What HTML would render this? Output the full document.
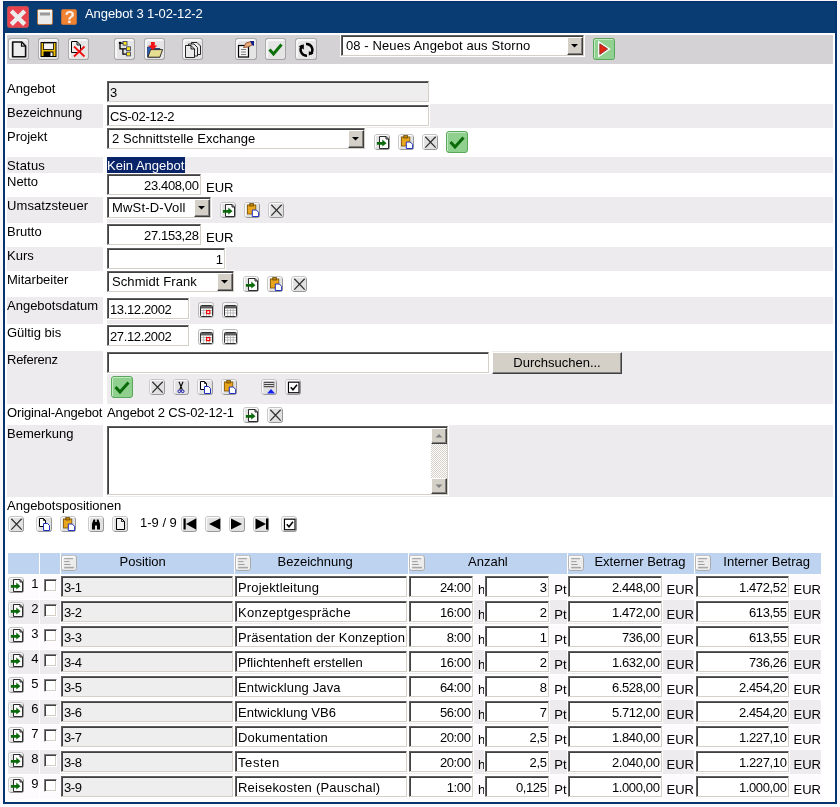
<!DOCTYPE html>
<html lang="de"><head><meta charset="utf-8"><title>Angebot 3 1-02-12-2</title>
<style>
html,body{margin:0;padding:0;}
body{width:840px;height:807px;position:relative;overflow:hidden;background:#faf7fa;
 font-family:"Liberation Sans",Arial,sans-serif;font-size:13px;line-height:15px;color:#000;}
#w div,#w span.t,#w svg.i{position:absolute;box-sizing:border-box;}
#w{position:absolute;left:0;top:0;width:840px;height:807px;will-change:transform;}
span.t{white-space:nowrap;display:block;}
.in{background:#fff;border:1px solid;border-color:#606060 #d4d0c8 #d4d0c8 #606060;
 box-shadow:inset 1px 1px 0 #404040, 0 0 0 1px #fff;overflow:hidden;}
.in.ro{background:#eeeeee;}
.dd{background:#d4d0c8;border:1px solid;border-color:#fff #404040 #404040 #fff;box-shadow:inset -1px -1px 0 #808080;}
.dd svg{position:absolute;left:-1px;top:-1px;}
.tb{background:#e5e5e5;border-radius:3px;border:1px solid;border-color:#adadad #a4a4a4 #a4a4a4 #adadad;box-shadow:inset 2px 2px 0 #f7f7f7;}
</style></head><body>

<div id="w">
<div style="left:3px;top:1px;width:834px;height:803px;background:#05346e;"></div>
<div style="left:5px;top:2.5px;width:830px;height:31px;background:#0a3c74;"></div>
<div style="left:5px;top:33px;width:830px;height:769px;background:#fff;"></div>
<div style="left:7px;top:35px;width:826px;height:29px;background:#d4d2d4;"></div>
<svg class="i" style="left:7px;top:6px" width="22" height="22" viewBox="0 0 22 22"><rect x="0.5" y="0.5" width="21" height="21" rx="2" fill="#e9414d" stroke="#b85058"/><path d="M4.3 5 L17.7 18.4 M17.7 5 L4.3 18.4" stroke="#ececec" stroke-width="4.4" fill="none"/></svg>
<svg class="i" style="left:37px;top:9px" width="16" height="16" viewBox="0 0 16 16"><rect x="0.5" y="0.5" width="15" height="15" rx="1.5" fill="#ececec" stroke="#b57845"/><rect x="1" y="1" width="14" height="2" fill="#fafafa"/><rect x="3" y="3.5" width="10" height="3" fill="#9a9a9a"/></svg>
<svg class="i" style="left:61px;top:9px" width="16" height="16" viewBox="0 0 16 16"><rect x="0.5" y="0.5" width="15" height="15" rx="1.5" fill="#f08232" stroke="#b87040"/><text x="8.6" y="14.2" font-family="Liberation Sans, Arial, sans-serif" font-weight="bold" font-size="17" text-anchor="middle" fill="#f6f0ea">?</text></svg>
<span class="t" style="left:85px;top:6px;letter-spacing:-0.19px;color:#fff;letter-spacing:-0.08px;">Angebot 3 1-02-12-2</span>
<div style="left:7.5px;top:38px;width:21.4px;height:21.8px;" class="tb"></div>
<div style="left:37.5px;top:38px;width:21.4px;height:21.8px;" class="tb"></div>
<div style="left:67.5px;top:38px;width:21.4px;height:21.8px;" class="tb"></div>
<div style="left:113.5px;top:38px;width:21.4px;height:21.8px;" class="tb"></div>
<div style="left:143.5px;top:38px;width:21.4px;height:21.8px;" class="tb"></div>
<div style="left:181.5px;top:38px;width:21.4px;height:21.8px;" class="tb"></div>
<div style="left:235.3px;top:38px;width:21.4px;height:21.8px;" class="tb"></div>
<div style="left:265px;top:38px;width:21.4px;height:21.8px;" class="tb"></div>
<div style="left:295.2px;top:38px;width:21.4px;height:21.8px;" class="tb"></div>
<svg class="i" style="left:7.5px;top:38px" width="21" height="22" viewBox="0 0 21 22"><path d="M4.700 4 H13.800 L17.600 8 V18.800 H4.700 Z" fill="#ededed" stroke="#111" stroke-width="1.600" stroke-linejoin="round"/><path d="M13.500 4.200 V8.200 H17.400" fill="none" stroke="#111" stroke-width="1.200"/></svg>
<svg class="i" style="left:37.5px;top:38px" width="21" height="22" viewBox="0 0 21 22"><rect x="3" y="4.5" width="15" height="14" fill="#f0c000" stroke="#000" stroke-width="1"/><rect x="5.5" y="5" width="10" height="6.5" fill="#f4f4f4" stroke="#000" stroke-width="0.8"/><rect x="5.5" y="13.5" width="10" height="5" fill="#000"/><rect x="12.5" y="14.5" width="2" height="3.5" fill="#fff"/></svg>
<svg class="i" style="left:67.2px;top:38px" width="21" height="22" viewBox="0 0 21 22"><path d="M4.5 3.5 H10 L13.5 7 V14.5 H4.5 Z" fill="#ececec" stroke="#000" stroke-width="1"/><path d="M10 3.5 V7 H13.5" fill="none" stroke="#000" stroke-width="0.9"/><path d="M7 8.5 L17.5 18.5 M17.5 8.5 L7 18.5" stroke="#f01010" stroke-width="1.8" fill="none"/></svg>
<svg class="i" style="left:113.6px;top:38px" width="21" height="22" viewBox="0 0 21 22"><path d="M6 5 V10.900 H12.800 M8.900 10.900 V16.200 H12.800 M6 5 H9" stroke="#000" stroke-width="1.250" fill="none"/><circle cx="6" cy="5" r="1.250" fill="#000"/><rect x="9.100" y="3.500" width="3.900" height="3.700" fill="#f8e020" stroke="#303a60" stroke-width="0.800"/><rect x="12.600" y="8.800" width="3.900" height="3.800" fill="#f8e020" stroke="#303a60" stroke-width="0.800"/><rect x="12.600" y="14.100" width="3.900" height="3.800" fill="#f8e020" stroke="#303a60" stroke-width="0.800"/></svg>
<svg class="i" style="left:143.5px;top:38px" width="21" height="22" viewBox="0 0 21 22"><path d="M3.600 19 V9 H8 L9.500 10.500 H15.800 V19 Z" fill="#2f64c4" stroke="#102a60" stroke-width="0.800"/><path d="M3.900 19.200 L6.600 11.600 H18.600 L15.800 19.200 Z" fill="#e6de90" stroke="#222" stroke-width="0.900"/><path d="M6.900 4 H10.800 V7.500 H13.400 L8.850 11.900 L4.300 7.500 H6.900 Z" fill="#f21414"/></svg>
<svg class="i" style="left:181.5px;top:38px" width="21" height="22" viewBox="0 0 21 22"><path d="M9.500 4.500 H15 L18.500 8 V16.500 H9.500 Z" fill="#ebebeb" stroke="#1c1c1c" stroke-width="0.95"/><path d="M6.500 6 H12 L15.500 9.500 V18 H6.500 Z" fill="#ebebeb" stroke="#1c1c1c" stroke-width="0.95"/><path d="M3.500 7.500 H9 L12.500 11 V19.500 H3.500 Z" fill="#ebebeb" stroke="#1c1c1c" stroke-width="0.95"/><path d="M9 7.500 V11 H12.500" fill="none" stroke="#000" stroke-width="0.9"/></svg>
<svg class="i" style="left:235.3px;top:38px" width="21" height="22" viewBox="0 0 21 22"><rect x="3.500" y="7.500" width="10" height="11.500" fill="#f4f4f4" stroke="#000" stroke-width="1.2"/><path d="M6 11.500 H11 M6 14 H11 M6 16.500 H11" stroke="#707070" stroke-width="0.9"/><path d="M8.500 9.500 L11 5 L16 3.500 L18 6.500 L13 9 Z" fill="#e8a878" stroke="#804020" stroke-width="0.8"/><path d="M15 3 L19 3 L19 8 L17 7 Z" fill="#10208a"/></svg>
<svg class="i" style="left:265px;top:38px" width="21" height="22" viewBox="0 0 21 22"><path d="M4.500 11.500 L8.500 16 L16.500 6.500" fill="none" stroke="#0b720b" stroke-width="3"/></svg>
<svg class="i" style="left:295.2px;top:38px" width="21" height="22" viewBox="0 0 21 22"><path d="M12 17.600 A5.800 5.800 0 0 1 7.400 7.700" fill="none" stroke="#000" stroke-width="2.500"/><path d="M11 6 A5.800 5.800 0 0 1 15.600 15.900" fill="none" stroke="#000" stroke-width="2.500"/><path d="M3.700 8.200 L8.800 6.200 L8.800 11.400 Z" fill="#000"/><path d="M18.700 15.400 L13.800 13.200 L13.800 17.500 Z" fill="#000"/></svg>
<div class="in" style="left:341px;top:35px;width:243px;height:21px;"><span class="t" style="left:4px;top:2px;letter-spacing:0.1px;">08 - Neues Angebot aus Storno</span><div class="dd" style="right:0px;top:1px;width:16px;height:18px;"><svg width="16" height="18" viewBox="0 0 16 18"><path d="M4 7.0 h7 l-3.5 3.5 z" fill="#000"/></svg></div></div>
<svg class="i" style="left:593px;top:38px" width="22" height="22" viewBox="0 0 22 22"><rect x="0.5" y="0.5" width="21" height="21" rx="2" fill="#90d090" stroke="#5aa65a"/><path d="M1.5 20 V3 Q1.5 1.5 3 1.5 H20" stroke="#c4eac4" fill="none"/><path d="M5 2.500 L17.800 11 L5 19.800 Z" fill="#f2fbf2"/><path d="M6.800 5.800 L14.600 11 L6.800 16.400 Z" fill="#e32410" stroke="#8a2a2a" stroke-width="0.9"/></svg>
<span class="t" style="left:7px;top:81px;">Angebot</span>
<div style="left:7px;top:104px;width:96px;height:24px;background:#eeebee;"></div>
<div style="left:107px;top:104px;width:726px;height:24px;background:#eeebee;"></div>
<span class="t" style="left:7px;top:105px;">Bezeichnung</span>
<span class="t" style="left:7px;top:129px;">Projekt</span>
<div style="left:7px;top:157px;width:96px;height:16px;background:#eeebee;"></div>
<div style="left:107px;top:157px;width:726px;height:16px;background:#eeebee;"></div>
<span class="t" style="left:7px;top:158px;letter-spacing:0.2px;">Status</span>
<span class="t" style="left:7px;top:174px;">Netto</span>
<div style="left:7px;top:197px;width:96px;height:26px;background:#eeebee;"></div>
<div style="left:107px;top:197px;width:726px;height:26px;background:#eeebee;"></div>
<span class="t" style="left:7px;top:198px;letter-spacing:0.08px;">Umsatzsteuer</span>
<span class="t" style="left:7px;top:224px;">Brutto</span>
<div style="left:7px;top:247px;width:96px;height:24px;background:#eeebee;"></div>
<div style="left:107px;top:247px;width:726px;height:24px;background:#eeebee;"></div>
<span class="t" style="left:7px;top:248px;">Kurs</span>
<span class="t" style="left:7px;top:272px;">Mitarbeiter</span>
<div style="left:7px;top:297px;width:96px;height:27px;background:#eeebee;"></div>
<div style="left:107px;top:297px;width:726px;height:27px;background:#eeebee;"></div>
<span class="t" style="left:7px;top:298px;">Angebotsdatum</span>
<span class="t" style="left:7px;top:325px;">Gültig bis</span>
<div style="left:7px;top:351px;width:96px;height:53px;background:#eeebee;"></div>
<div style="left:107px;top:351px;width:726px;height:53px;background:#eeebee;"></div>
<span class="t" style="left:7px;top:352px;letter-spacing:-0.25px;">Referenz</span>
<span class="t" style="left:7px;top:405px;letter-spacing:-0.02px;letter-spacing:-0.14px;">Original-Angebot</span>
<div style="left:7px;top:425px;width:96px;height:72px;background:#eeebee;"></div>
<div style="left:107px;top:425px;width:726px;height:72px;background:#eeebee;"></div>
<span class="t" style="left:7px;top:426px;">Bemerkung</span>
<div class="in ro" style="left:107px;top:81px;width:322px;height:21px;"><span class="t" style="left:2px;right:1.4px;top:3px;text-align:left;letter-spacing:-0.36px;">3</span></div>
<div class="in" style="left:107px;top:105px;width:322px;height:21px;"><span class="t" style="left:2px;right:1.4px;top:3px;text-align:left;letter-spacing:-0.29px;">CS-02-12-2</span></div>
<div class="in" style="left:107px;top:128px;width:258px;height:21px;"><span class="t" style="left:4px;top:2px;letter-spacing:0.04px;">2 Schnittstelle Exchange</span><div class="dd" style="right:0px;top:1px;width:16px;height:18px;"><svg width="16" height="18" viewBox="0 0 16 18"><path d="M4 7.0 h7 l-3.5 3.5 z" fill="#000"/></svg></div></div>
<svg class="i" style="left:374px;top:134px;" width="16" height="16" viewBox="0 0 16 16"><rect x="0.5" y="0.5" width="15" height="15" rx="2.5" fill="#e1e1e1" stroke="#c4c4c4"/><path d="M1.500 14 V3 Q1.500 1.500 3 1.500 H14" stroke="#fbfbfb" stroke-width="1.2" fill="none"/><path d="M2.500 15.500 H13.500 Q15.500 15.500 15.500 13.500 V2.500" stroke="#989898" fill="none"/><path d="M5.500 2.500 H12 L14.500 5 V14.500 H5.500 Z" fill="#fafafa" stroke="#111" stroke-width="0.88"/><path d="M12 2.500 V5 H14.500" fill="none" stroke="#111" stroke-width="0.9"/><path d="M2.900 7.900 H8.300 V5.400 L12.500 9.300 L8.300 12.600 V10.700 H2.900 Z" fill="#0a6a0a"/></svg>
<svg class="i" style="left:398px;top:134px;" width="16" height="16" viewBox="0 0 16 16"><rect x="0.5" y="0.5" width="15" height="15" rx="2.5" fill="#e1e1e1" stroke="#c4c4c4"/><path d="M1.500 14 V3 Q1.500 1.500 3 1.500 H14" stroke="#fbfbfb" stroke-width="1.2" fill="none"/><path d="M2.500 15.500 H13.500 Q15.500 15.500 15.500 13.500 V2.500" stroke="#989898" fill="none"/><rect x="3.400" y="3" width="8.400" height="9" fill="#e9a61c" stroke="#7a5200" stroke-width="0.8"/><rect x="5.800" y="1.600" width="3.600" height="2.400" fill="#c08400" stroke="#5a3c00" stroke-width="0.7"/><path d="M8.300 8 H12.300 L14.600 10.300 V14.500 H8.300 Z" fill="#fff" stroke="#2030c0" stroke-width="1"/></svg>
<svg class="i" style="left:422px;top:134px;" width="16" height="16" viewBox="0 0 16 16"><rect x="0.5" y="0.5" width="15" height="15" rx="2.5" fill="#e1e1e1" stroke="#c4c4c4"/><path d="M1.500 14 V3 Q1.500 1.500 3 1.500 H14" stroke="#fbfbfb" stroke-width="1.2" fill="none"/><path d="M2.500 15.500 H13.500 Q15.500 15.500 15.500 13.500 V2.500" stroke="#989898" fill="none"/><path d="M3.300 2.800 L13.700 13.600 M13.700 2.800 L3.300 13.600" stroke="#303030" stroke-width="1.250" fill="none"/></svg>
<svg class="i" style="left:446px;top:131px;" width="22" height="22" viewBox="0 0 22 22"><rect x="0.5" y="0.5" width="21" height="21" rx="2.5" fill="#8fd08f" stroke="#5aa65a"/><path d="M1.5 20 V3 Q1.5 1.5 3 1.5 H20" stroke="#c4eac4" fill="none"/><path d="M4.5 11 L9 16 L17.5 6.5" fill="none" stroke="#0b6b0b" stroke-width="3"/></svg>
<div style="left:107px;top:157px;width:78px;height:16px;background:#0a246a;"></div>
<span class="t" style="left:107px;top:158px;color:#fff;">Kein Angebot</span>
<div class="in" style="left:107px;top:174px;width:94px;height:21px;"><span class="t" style="left:2px;right:1.4px;top:3px;text-align:right;letter-spacing:-0.36px;">23.408,00</span></div>
<span class="t" style="left:206px;top:179.5px;">EUR</span>
<div class="in" style="left:107px;top:197px;width:104px;height:21px;"><span class="t" style="left:4px;top:2px;letter-spacing:0.19px;">MwSt-D-Voll</span><div class="dd" style="right:0px;top:1px;width:16px;height:18px;"><svg width="16" height="18" viewBox="0 0 16 18"><path d="M4 7.0 h7 l-3.5 3.5 z" fill="#000"/></svg></div></div>
<svg class="i" style="left:220px;top:202px;" width="16" height="16" viewBox="0 0 16 16"><rect x="0.5" y="0.5" width="15" height="15" rx="2.5" fill="#e1e1e1" stroke="#c4c4c4"/><path d="M1.500 14 V3 Q1.500 1.500 3 1.500 H14" stroke="#fbfbfb" stroke-width="1.2" fill="none"/><path d="M2.500 15.500 H13.500 Q15.500 15.500 15.500 13.500 V2.500" stroke="#989898" fill="none"/><path d="M5.500 2.500 H12 L14.500 5 V14.500 H5.500 Z" fill="#fafafa" stroke="#111" stroke-width="0.88"/><path d="M12 2.500 V5 H14.500" fill="none" stroke="#111" stroke-width="0.9"/><path d="M2.900 7.900 H8.300 V5.400 L12.500 9.300 L8.300 12.600 V10.700 H2.900 Z" fill="#0a6a0a"/></svg>
<svg class="i" style="left:244px;top:202px;" width="16" height="16" viewBox="0 0 16 16"><rect x="0.5" y="0.5" width="15" height="15" rx="2.5" fill="#e1e1e1" stroke="#c4c4c4"/><path d="M1.500 14 V3 Q1.500 1.500 3 1.500 H14" stroke="#fbfbfb" stroke-width="1.2" fill="none"/><path d="M2.500 15.500 H13.500 Q15.500 15.500 15.500 13.500 V2.500" stroke="#989898" fill="none"/><rect x="3.400" y="3" width="8.400" height="9" fill="#e9a61c" stroke="#7a5200" stroke-width="0.8"/><rect x="5.800" y="1.600" width="3.600" height="2.400" fill="#c08400" stroke="#5a3c00" stroke-width="0.7"/><path d="M8.300 8 H12.300 L14.600 10.300 V14.500 H8.300 Z" fill="#fff" stroke="#2030c0" stroke-width="1"/></svg>
<svg class="i" style="left:268px;top:202px;" width="16" height="16" viewBox="0 0 16 16"><rect x="0.5" y="0.5" width="15" height="15" rx="2.5" fill="#e1e1e1" stroke="#c4c4c4"/><path d="M1.500 14 V3 Q1.500 1.500 3 1.500 H14" stroke="#fbfbfb" stroke-width="1.2" fill="none"/><path d="M2.500 15.500 H13.500 Q15.500 15.500 15.500 13.500 V2.500" stroke="#989898" fill="none"/><path d="M3.300 2.800 L13.700 13.600 M13.700 2.800 L3.300 13.600" stroke="#303030" stroke-width="1.250" fill="none"/></svg>
<div class="in" style="left:107px;top:224px;width:94px;height:21px;"><span class="t" style="left:2px;right:1.4px;top:3px;text-align:right;letter-spacing:-0.36px;">27.153,28</span></div>
<span class="t" style="left:206px;top:230px;">EUR</span>
<div class="in" style="left:107px;top:248px;width:118px;height:21px;"><span class="t" style="left:2px;right:1.4px;top:3px;text-align:right;letter-spacing:-0.36px;">1</span></div>
<div class="in" style="left:107px;top:271px;width:127px;height:21px;"><span class="t" style="left:4px;top:2px;letter-spacing:0.08px;">Schmidt Frank</span><div class="dd" style="right:0px;top:1px;width:16px;height:18px;"><svg width="16" height="18" viewBox="0 0 16 18"><path d="M4 7.0 h7 l-3.5 3.5 z" fill="#000"/></svg></div></div>
<svg class="i" style="left:243px;top:276px;" width="16" height="16" viewBox="0 0 16 16"><rect x="0.5" y="0.5" width="15" height="15" rx="2.5" fill="#e1e1e1" stroke="#c4c4c4"/><path d="M1.500 14 V3 Q1.500 1.500 3 1.500 H14" stroke="#fbfbfb" stroke-width="1.2" fill="none"/><path d="M2.500 15.500 H13.500 Q15.500 15.500 15.500 13.500 V2.500" stroke="#989898" fill="none"/><path d="M5.500 2.500 H12 L14.500 5 V14.500 H5.500 Z" fill="#fafafa" stroke="#111" stroke-width="0.88"/><path d="M12 2.500 V5 H14.500" fill="none" stroke="#111" stroke-width="0.9"/><path d="M2.900 7.900 H8.300 V5.400 L12.500 9.300 L8.300 12.600 V10.700 H2.900 Z" fill="#0a6a0a"/></svg>
<svg class="i" style="left:267px;top:276px;" width="16" height="16" viewBox="0 0 16 16"><rect x="0.5" y="0.5" width="15" height="15" rx="2.5" fill="#e1e1e1" stroke="#c4c4c4"/><path d="M1.500 14 V3 Q1.500 1.500 3 1.500 H14" stroke="#fbfbfb" stroke-width="1.2" fill="none"/><path d="M2.500 15.500 H13.500 Q15.500 15.500 15.500 13.500 V2.500" stroke="#989898" fill="none"/><rect x="3.400" y="3" width="8.400" height="9" fill="#e9a61c" stroke="#7a5200" stroke-width="0.8"/><rect x="5.800" y="1.600" width="3.600" height="2.400" fill="#c08400" stroke="#5a3c00" stroke-width="0.7"/><path d="M8.300 8 H12.300 L14.600 10.300 V14.500 H8.300 Z" fill="#fff" stroke="#2030c0" stroke-width="1"/></svg>
<svg class="i" style="left:291px;top:276px;" width="16" height="16" viewBox="0 0 16 16"><rect x="0.5" y="0.5" width="15" height="15" rx="2.5" fill="#e1e1e1" stroke="#c4c4c4"/><path d="M1.500 14 V3 Q1.500 1.500 3 1.500 H14" stroke="#fbfbfb" stroke-width="1.2" fill="none"/><path d="M2.500 15.500 H13.500 Q15.500 15.500 15.500 13.500 V2.500" stroke="#989898" fill="none"/><path d="M3.300 2.800 L13.700 13.600 M13.700 2.800 L3.300 13.600" stroke="#303030" stroke-width="1.250" fill="none"/></svg>
<div class="in" style="left:107px;top:298px;width:82px;height:21px;"><span class="t" style="left:2px;right:1.4px;top:3px;text-align:left;letter-spacing:-0.36px;">13.12.2002</span></div>
<svg class="i" style="left:198px;top:302px;" width="16" height="16" viewBox="0 0 16 16"><rect x="0.5" y="0.5" width="15" height="15" rx="2" fill="#f6f6f6" stroke="#b8b8b8"/><rect x="2.5" y="3.5" width="12" height="11" rx="1" fill="#fff" stroke="#303030"/><rect x="3" y="4" width="11" height="2.5" fill="#606060"/><path d="M3 8.5 H14 M3 11 H14 M5.7 6.5 V14 M8.5 6.5 V14 M11.2 6.5 V14" stroke="#b4b4b4" fill="none" stroke-width="0.9"/><rect x="8.6" y="8.6" width="3.2" height="3" fill="#fff" stroke="#f00000" stroke-width="1.2"/></svg>
<svg class="i" style="left:222px;top:302px;" width="16" height="16" viewBox="0 0 16 16"><rect x="0.5" y="0.5" width="15" height="15" rx="2" fill="#f6f6f6" stroke="#b8b8b8"/><rect x="2.5" y="3.5" width="12" height="11" rx="1" fill="#fff" stroke="#303030"/><rect x="3" y="4" width="11" height="2.5" fill="#606060"/><path d="M3 8.5 H14 M3 11 H14 M5.7 6.5 V14 M8.5 6.5 V14 M11.2 6.5 V14" stroke="#b4b4b4" fill="none" stroke-width="0.9"/></svg>
<div class="in" style="left:107px;top:325px;width:82px;height:21px;"><span class="t" style="left:2px;right:1.4px;top:3px;text-align:left;letter-spacing:-0.36px;">27.12.2002</span></div>
<svg class="i" style="left:198px;top:329px;" width="16" height="16" viewBox="0 0 16 16"><rect x="0.5" y="0.5" width="15" height="15" rx="2" fill="#f6f6f6" stroke="#b8b8b8"/><rect x="2.5" y="3.5" width="12" height="11" rx="1" fill="#fff" stroke="#303030"/><rect x="3" y="4" width="11" height="2.5" fill="#606060"/><path d="M3 8.5 H14 M3 11 H14 M5.7 6.5 V14 M8.5 6.5 V14 M11.2 6.5 V14" stroke="#b4b4b4" fill="none" stroke-width="0.9"/><rect x="8.6" y="8.6" width="3.2" height="3" fill="#fff" stroke="#f00000" stroke-width="1.2"/></svg>
<svg class="i" style="left:222px;top:329px;" width="16" height="16" viewBox="0 0 16 16"><rect x="0.5" y="0.5" width="15" height="15" rx="2" fill="#f6f6f6" stroke="#b8b8b8"/><rect x="2.5" y="3.5" width="12" height="11" rx="1" fill="#fff" stroke="#303030"/><rect x="3" y="4" width="11" height="2.5" fill="#606060"/><path d="M3 8.5 H14 M3 11 H14 M5.7 6.5 V14 M8.5 6.5 V14 M11.2 6.5 V14" stroke="#b4b4b4" fill="none" stroke-width="0.9"/></svg>
<div style="left:107px;top:351px;width:385px;height:23px;background:#fff;"></div>
<div class="in" style="left:107px;top:352px;width:382px;height:21px;"><span class="t" style="left:2px;right:1.4px;top:3px;text-align:left;"></span></div>
<div style="left:492px;top:352px;width:130px;height:22px;background:#d4d0c8;border:1px solid;border-color:#fff #404040 #404040 #fff;box-shadow:inset -1px -1px 0 #808080;"><span class="t" style="left:0;right:0;top:2px;text-align:center;">Durchsuchen...</span></div>
<svg class="i" style="left:111px;top:376px;" width="22" height="22" viewBox="0 0 22 22"><rect x="0.5" y="0.5" width="21" height="21" rx="2.5" fill="#8fd08f" stroke="#5aa65a"/><path d="M1.5 20 V3 Q1.5 1.5 3 1.5 H20" stroke="#c4eac4" fill="none"/><path d="M4.5 11 L9 16 L17.5 6.5" fill="none" stroke="#0b6b0b" stroke-width="3"/></svg>
<svg class="i" style="left:149px;top:379px;" width="16" height="16" viewBox="0 0 16 16"><rect x="0.5" y="0.5" width="15" height="15" rx="2.5" fill="#e1e1e1" stroke="#c4c4c4"/><path d="M1.500 14 V3 Q1.500 1.500 3 1.500 H14" stroke="#fbfbfb" stroke-width="1.2" fill="none"/><path d="M2.500 15.500 H13.500 Q15.500 15.500 15.500 13.500 V2.500" stroke="#989898" fill="none"/><path d="M3.300 2.800 L13.700 13.600 M13.700 2.800 L3.300 13.600" stroke="#303030" stroke-width="1.250" fill="none"/></svg>
<svg class="i" style="left:173px;top:379px;" width="16" height="16" viewBox="0 0 16 16"><rect x="0.5" y="0.5" width="15" height="15" rx="2.5" fill="#e1e1e1" stroke="#c4c4c4"/><path d="M1.500 14 V3 Q1.500 1.500 3 1.500 H14" stroke="#fbfbfb" stroke-width="1.2" fill="none"/><path d="M2.500 15.500 H13.500 Q15.500 15.500 15.500 13.500 V2.500" stroke="#989898" fill="none"/><path d="M6 2.800 L9.300 10.800 M10 2.800 L6.700 10.800" stroke="#000" stroke-width="1.1" fill="none"/><circle cx="6.300" cy="12.300" r="1.350" fill="none" stroke="#1818b0" stroke-width="1"/><circle cx="9.700" cy="12.300" r="1.350" fill="none" stroke="#1818b0" stroke-width="1"/></svg>
<svg class="i" style="left:197px;top:379px;" width="16" height="16" viewBox="0 0 16 16"><rect x="0.5" y="0.5" width="15" height="15" rx="2.5" fill="#e1e1e1" stroke="#c4c4c4"/><path d="M1.500 14 V3 Q1.500 1.500 3 1.500 H14" stroke="#fbfbfb" stroke-width="1.2" fill="none"/><path d="M2.500 15.500 H13.500 Q15.500 15.500 15.500 13.500 V2.500" stroke="#989898" fill="none"/><path d="M3.5 2.5 H7.5 L9.5 4.5 V10.5 H3.5 Z" fill="#fff" stroke="#000"/><path d="M7.5 2.5 V4.5 H9.5" fill="none" stroke="#000" stroke-width="0.8"/><path d="M7.5 7.5 H11.5 L13.5 9.5 V14.5 H7.5 Z" fill="#fff" stroke="#2030c0"/></svg>
<svg class="i" style="left:221px;top:379px;" width="16" height="16" viewBox="0 0 16 16"><rect x="0.5" y="0.5" width="15" height="15" rx="2.5" fill="#e1e1e1" stroke="#c4c4c4"/><path d="M1.500 14 V3 Q1.500 1.500 3 1.500 H14" stroke="#fbfbfb" stroke-width="1.2" fill="none"/><path d="M2.500 15.500 H13.500 Q15.500 15.500 15.500 13.500 V2.500" stroke="#989898" fill="none"/><rect x="3.400" y="3" width="8.400" height="9" fill="#e9a61c" stroke="#7a5200" stroke-width="0.8"/><rect x="5.800" y="1.600" width="3.600" height="2.400" fill="#c08400" stroke="#5a3c00" stroke-width="0.7"/><path d="M8.300 8 H12.300 L14.600 10.300 V14.500 H8.300 Z" fill="#fff" stroke="#2030c0" stroke-width="1"/></svg>
<svg class="i" style="left:261px;top:379px;" width="16" height="16" viewBox="0 0 16 16"><rect x="0.5" y="0.5" width="15" height="15" rx="2.5" fill="#e1e1e1" stroke="#c4c4c4"/><path d="M1.500 14 V3 Q1.500 1.500 3 1.500 H14" stroke="#fbfbfb" stroke-width="1.2" fill="none"/><path d="M2.500 15.500 H13.500 Q15.500 15.500 15.500 13.500 V2.500" stroke="#989898" fill="none"/><path d="M3 3.5 H13 M3 5.5 H13 M3 7.5 H13" stroke="#404040" fill="none" shape-rendering="crispEdges"/><rect x="3" y="3" width="10" height="5" fill="none" stroke="#707070" stroke-width="0.6"/><path d="M6 14.5 L10 10 L14 14.5 Z" fill="#1020f0"/></svg>
<svg class="i" style="left:285px;top:379px;" width="16" height="16" viewBox="0 0 16 16"><rect x="0.5" y="0.5" width="15" height="15" rx="2.5" fill="#e1e1e1" stroke="#c4c4c4"/><path d="M1.500 14 V3 Q1.500 1.500 3 1.500 H14" stroke="#fbfbfb" stroke-width="1.2" fill="none"/><path d="M2.500 15.500 H13.500 Q15.500 15.500 15.500 13.500 V2.500" stroke="#989898" fill="none"/><rect x="3.5" y="3.2" width="10.500" height="10.500" fill="#fff" stroke="#000" stroke-width="1.1"/><path d="M5.800 8.200 L8 10.800 L12 5.800" fill="none" stroke="#000" stroke-width="1.500"/></svg>
<span class="t" style="left:107px;top:405px;letter-spacing:-0.16px;">Angebot 2 CS-02-12-1</span>
<svg class="i" style="left:243px;top:407px;" width="16" height="16" viewBox="0 0 16 16"><rect x="0.5" y="0.5" width="15" height="15" rx="2.5" fill="#e1e1e1" stroke="#c4c4c4"/><path d="M1.500 14 V3 Q1.500 1.500 3 1.500 H14" stroke="#fbfbfb" stroke-width="1.2" fill="none"/><path d="M2.500 15.500 H13.500 Q15.500 15.500 15.500 13.500 V2.500" stroke="#989898" fill="none"/><path d="M5.500 2.500 H12 L14.500 5 V14.500 H5.500 Z" fill="#fafafa" stroke="#111" stroke-width="0.88"/><path d="M12 2.500 V5 H14.500" fill="none" stroke="#111" stroke-width="0.9"/><path d="M2.900 7.900 H8.300 V5.400 L12.500 9.300 L8.300 12.600 V10.700 H2.900 Z" fill="#0a6a0a"/></svg>
<svg class="i" style="left:267px;top:407px;" width="16" height="16" viewBox="0 0 16 16"><rect x="0.5" y="0.5" width="15" height="15" rx="2.5" fill="#e1e1e1" stroke="#c4c4c4"/><path d="M1.500 14 V3 Q1.500 1.500 3 1.500 H14" stroke="#fbfbfb" stroke-width="1.2" fill="none"/><path d="M2.500 15.500 H13.500 Q15.500 15.500 15.500 13.500 V2.500" stroke="#989898" fill="none"/><path d="M3.300 2.800 L13.700 13.600 M13.700 2.800 L3.300 13.600" stroke="#303030" stroke-width="1.250" fill="none"/></svg>
<div class="in" style="left:107px;top:426px;width:341px;height:69px;"><div style="right:0px;top:1px;width:16px;height:66px;background:#e8e6e2;background-image:repeating-conic-gradient(#d4d0c8 0 25%,#fff 0 50%);background-size:2px 2px;"></div><div class="dd" style="right:0px;top:1px;width:16px;height:16px;"><svg width="16" height="16"><path d="M4.5 9.5 h7 l-3.5 -3.5 z" fill="#808080"/></svg></div><div class="dd" style="right:0px;bottom:0px;width:16px;height:16px;"><svg width="16" height="16"><path d="M4.5 6.5 h7 l-3.5 3.5 z" fill="#808080"/></svg></div></div>
<span class="t" style="left:7px;top:498px;">Angebotspositionen</span>
<svg class="i" style="left:8px;top:516px;" width="16" height="16" viewBox="0 0 16 16"><rect x="0.5" y="0.5" width="15" height="15" rx="2.5" fill="#e1e1e1" stroke="#c4c4c4"/><path d="M1.500 14 V3 Q1.500 1.500 3 1.500 H14" stroke="#fbfbfb" stroke-width="1.2" fill="none"/><path d="M2.500 15.500 H13.500 Q15.500 15.500 15.500 13.500 V2.500" stroke="#989898" fill="none"/><path d="M3.300 2.800 L13.700 13.600 M13.700 2.800 L3.300 13.600" stroke="#303030" stroke-width="1.250" fill="none"/></svg>
<svg class="i" style="left:36px;top:516px;" width="16" height="16" viewBox="0 0 16 16"><rect x="0.5" y="0.5" width="15" height="15" rx="2.5" fill="#e1e1e1" stroke="#c4c4c4"/><path d="M1.500 14 V3 Q1.500 1.500 3 1.500 H14" stroke="#fbfbfb" stroke-width="1.2" fill="none"/><path d="M2.500 15.500 H13.500 Q15.500 15.500 15.500 13.500 V2.500" stroke="#989898" fill="none"/><path d="M3.5 2.5 H7.5 L9.5 4.5 V10.5 H3.5 Z" fill="#fff" stroke="#000"/><path d="M7.5 2.5 V4.5 H9.5" fill="none" stroke="#000" stroke-width="0.8"/><path d="M7.5 7.5 H11.5 L13.5 9.5 V14.5 H7.5 Z" fill="#fff" stroke="#2030c0"/></svg>
<svg class="i" style="left:60px;top:516px;" width="16" height="16" viewBox="0 0 16 16"><rect x="0.5" y="0.5" width="15" height="15" rx="2.5" fill="#e1e1e1" stroke="#c4c4c4"/><path d="M1.500 14 V3 Q1.500 1.500 3 1.500 H14" stroke="#fbfbfb" stroke-width="1.2" fill="none"/><path d="M2.500 15.500 H13.500 Q15.500 15.500 15.500 13.500 V2.500" stroke="#989898" fill="none"/><rect x="3.400" y="3" width="8.400" height="9" fill="#e9a61c" stroke="#7a5200" stroke-width="0.8"/><rect x="5.800" y="1.600" width="3.600" height="2.400" fill="#c08400" stroke="#5a3c00" stroke-width="0.7"/><path d="M8.300 8 H12.300 L14.600 10.300 V14.500 H8.300 Z" fill="#fff" stroke="#2030c0" stroke-width="1"/></svg>
<svg class="i" style="left:88px;top:516px;" width="16" height="16" viewBox="0 0 16 16"><rect x="0.5" y="0.5" width="15" height="15" rx="2.5" fill="#e1e1e1" stroke="#c4c4c4"/><path d="M1.500 14 V3 Q1.500 1.500 3 1.500 H14" stroke="#fbfbfb" stroke-width="1.2" fill="none"/><path d="M2.500 15.500 H13.500 Q15.500 15.500 15.500 13.500 V2.500" stroke="#989898" fill="none"/><path d="M4 13.5 V8 L5.5 3.5 H7.2 V6 H8.8 V3.5 H10.5 L12 8 V13.5 H9 V9.5 H7 V13.5 Z" fill="#000"/></svg>
<svg class="i" style="left:112px;top:516px;" width="16" height="16" viewBox="0 0 16 16"><rect x="0.5" y="0.5" width="15" height="15" rx="2.5" fill="#e1e1e1" stroke="#c4c4c4"/><path d="M1.500 14 V3 Q1.500 1.500 3 1.500 H14" stroke="#fbfbfb" stroke-width="1.2" fill="none"/><path d="M2.500 15.500 H13.500 Q15.500 15.500 15.500 13.500 V2.500" stroke="#989898" fill="none"/><path d="M4.5 2.5 H9.5 L12.5 5.5 V13.5 H4.5 Z" fill="#f4f4f4" stroke="#000"/><path d="M9.5 2.5 V5.5 H12.5" fill="none" stroke="#000" stroke-width="0.8"/></svg>
<span class="t" style="left:140px;top:515px;letter-spacing:-0.26px;letter-spacing:0;">1-9 / 9</span>
<svg class="i" style="left:181px;top:516px;" width="16" height="16" viewBox="0 0 16 16"><rect x="0.5" y="0.5" width="15" height="15" rx="2.5" fill="#e1e1e1" stroke="#c4c4c4"/><path d="M1.500 14 V3 Q1.500 1.500 3 1.500 H14" stroke="#fbfbfb" stroke-width="1.2" fill="none"/><path d="M2.500 15.500 H13.500 Q15.500 15.500 15.500 13.500 V2.500" stroke="#989898" fill="none"/><rect x="2.500" y="2.500" width="2.200" height="11" fill="#000"/><path d="M15 2.500 V13.500 L5 8 Z" fill="#000"/></svg>
<svg class="i" style="left:205px;top:516px;" width="16" height="16" viewBox="0 0 16 16"><rect x="0.5" y="0.5" width="15" height="15" rx="2.5" fill="#e1e1e1" stroke="#c4c4c4"/><path d="M1.500 14 V3 Q1.500 1.500 3 1.500 H14" stroke="#fbfbfb" stroke-width="1.2" fill="none"/><path d="M2.500 15.500 H13.500 Q15.500 15.500 15.500 13.500 V2.500" stroke="#989898" fill="none"/><path d="M15 2.500 V13.500 L4 8 Z" fill="#000"/></svg>
<svg class="i" style="left:229px;top:516px;" width="16" height="16" viewBox="0 0 16 16"><rect x="0.5" y="0.5" width="15" height="15" rx="2.5" fill="#e1e1e1" stroke="#c4c4c4"/><path d="M1.500 14 V3 Q1.500 1.500 3 1.500 H14" stroke="#fbfbfb" stroke-width="1.2" fill="none"/><path d="M2.500 15.500 H13.500 Q15.500 15.500 15.500 13.500 V2.500" stroke="#989898" fill="none"/><path d="M2 2.500 V13.500 L13 8 Z" fill="#000"/></svg>
<svg class="i" style="left:253px;top:516px;" width="16" height="16" viewBox="0 0 16 16"><rect x="0.5" y="0.5" width="15" height="15" rx="2.5" fill="#e1e1e1" stroke="#c4c4c4"/><path d="M1.500 14 V3 Q1.500 1.500 3 1.500 H14" stroke="#fbfbfb" stroke-width="1.2" fill="none"/><path d="M2.500 15.500 H13.500 Q15.500 15.500 15.500 13.500 V2.500" stroke="#989898" fill="none"/><rect x="13" y="2.500" width="2.200" height="11" fill="#000"/><path d="M2.500 2.500 V13.500 L13 8 Z" fill="#000"/></svg>
<svg class="i" style="left:281px;top:516px;" width="16" height="16" viewBox="0 0 16 16"><rect x="0.5" y="0.5" width="15" height="15" rx="2.5" fill="#e1e1e1" stroke="#c4c4c4"/><path d="M1.500 14 V3 Q1.500 1.500 3 1.500 H14" stroke="#fbfbfb" stroke-width="1.2" fill="none"/><path d="M2.500 15.500 H13.500 Q15.500 15.500 15.500 13.500 V2.500" stroke="#989898" fill="none"/><rect x="3.5" y="3.2" width="10.500" height="10.500" fill="#fff" stroke="#000" stroke-width="1.1"/><path d="M5.800 8.200 L8 10.800 L12 5.800" fill="none" stroke="#000" stroke-width="1.500"/></svg>
<div style="left:8px;top:553px;width:31px;height:21px;background:#bed3f0;"></div>
<div style="left:40px;top:553px;width:20px;height:21px;background:#bed3f0;"></div>
<div style="left:61px;top:553px;width:173px;height:21px;background:#bed3f0;"></div>
<svg class="i" style="left:61px;top:555px;" width="16" height="16" viewBox="0 0 16 16"><rect x="0.5" y="0.5" width="15" height="15" rx="2.2" fill="#ececec" stroke="#ababab"/><path d="M1.500 14 V2.800 Q1.500 1.500 2.800 1.500 H14" stroke="#fcfcfc" stroke-width="1.3" fill="none"/><path d="M3.200 3.700 H12 M3.200 6.600 H8.600 M3.200 9.500 H9.600" stroke="#9c9c9c" fill="none"/><path d="M3.200 12.600 H13" stroke="#a6a6a6" stroke-width="1.500" fill="none"/></svg>
<span class="t" style="left:119.5px;top:554px;">Position</span>
<div style="left:235px;top:553px;width:173px;height:21px;background:#bed3f0;"></div>
<svg class="i" style="left:235px;top:555px;" width="16" height="16" viewBox="0 0 16 16"><rect x="0.5" y="0.5" width="15" height="15" rx="2.2" fill="#ececec" stroke="#ababab"/><path d="M1.500 14 V2.800 Q1.500 1.500 2.800 1.500 H14" stroke="#fcfcfc" stroke-width="1.3" fill="none"/><path d="M3.200 3.700 H12 M3.200 6.600 H8.600 M3.200 9.500 H9.600" stroke="#9c9c9c" fill="none"/><path d="M3.200 12.600 H13" stroke="#a6a6a6" stroke-width="1.500" fill="none"/></svg>
<span class="t" style="left:277.5px;top:554px;">Bezeichnung</span>
<div style="left:409px;top:553px;width:158px;height:21px;background:#bed3f0;"></div>
<svg class="i" style="left:409px;top:555px;" width="16" height="16" viewBox="0 0 16 16"><rect x="0.5" y="0.5" width="15" height="15" rx="2.2" fill="#ececec" stroke="#ababab"/><path d="M1.500 14 V2.800 Q1.500 1.500 2.800 1.500 H14" stroke="#fcfcfc" stroke-width="1.3" fill="none"/><path d="M3.200 3.700 H12 M3.200 6.600 H8.600 M3.200 9.500 H9.600" stroke="#9c9c9c" fill="none"/><path d="M3.200 12.600 H13" stroke="#a6a6a6" stroke-width="1.500" fill="none"/></svg>
<span class="t" style="left:468px;top:554px;">Anzahl</span>
<div style="left:568px;top:553px;width:126px;height:21px;background:#bed3f0;"></div>
<svg class="i" style="left:568px;top:555px;" width="16" height="16" viewBox="0 0 16 16"><rect x="0.5" y="0.5" width="15" height="15" rx="2.2" fill="#ececec" stroke="#ababab"/><path d="M1.500 14 V2.800 Q1.500 1.500 2.800 1.500 H14" stroke="#fcfcfc" stroke-width="1.3" fill="none"/><path d="M3.200 3.700 H12 M3.200 6.600 H8.600 M3.200 9.500 H9.600" stroke="#9c9c9c" fill="none"/><path d="M3.200 12.600 H13" stroke="#a6a6a6" stroke-width="1.500" fill="none"/></svg>
<span class="t" style="left:594.4px;top:554px;">Externer Betrag</span>
<div style="left:695px;top:553px;width:126px;height:21px;background:#bed3f0;"></div>
<svg class="i" style="left:695px;top:555px;" width="16" height="16" viewBox="0 0 16 16"><rect x="0.5" y="0.5" width="15" height="15" rx="2.2" fill="#ececec" stroke="#ababab"/><path d="M1.500 14 V2.800 Q1.500 1.500 2.800 1.500 H14" stroke="#fcfcfc" stroke-width="1.3" fill="none"/><path d="M3.200 3.700 H12 M3.200 6.600 H8.600 M3.200 9.500 H9.600" stroke="#9c9c9c" fill="none"/><path d="M3.200 12.600 H13" stroke="#a6a6a6" stroke-width="1.500" fill="none"/></svg>
<span class="t" style="left:723.3px;top:554px;">Interner Betrag</span>
<div style="left:8px;top:575px;width:31px;height:24px;background:#fdfbfd;"></div>
<div style="left:40px;top:575px;width:20px;height:24px;background:#fdfbfd;"></div>
<div style="left:61px;top:575px;width:173px;height:24px;background:#fdfbfd;"></div>
<div style="left:235px;top:575px;width:173px;height:24px;background:#fdfbfd;"></div>
<div style="left:409px;top:575px;width:158px;height:24px;background:#fdfbfd;"></div>
<div style="left:568px;top:575px;width:126px;height:24px;background:#fdfbfd;"></div>
<div style="left:695px;top:575px;width:126px;height:24px;background:#fdfbfd;"></div>
<svg class="i" style="left:8px;top:577px;" width="16" height="16" viewBox="0 0 16 16"><rect x="0.5" y="0.5" width="15" height="15" rx="2.5" fill="#e1e1e1" stroke="#c4c4c4"/><path d="M1.500 14 V3 Q1.500 1.500 3 1.500 H14" stroke="#fbfbfb" stroke-width="1.2" fill="none"/><path d="M2.500 15.500 H13.500 Q15.500 15.500 15.500 13.500 V2.500" stroke="#989898" fill="none"/><path d="M5.500 2.500 H12 L14.500 5 V14.500 H5.500 Z" fill="#fafafa" stroke="#111" stroke-width="0.88"/><path d="M12 2.500 V5 H14.500" fill="none" stroke="#111" stroke-width="0.9"/><path d="M2.900 7.900 H8.300 V5.400 L12.500 9.300 L8.300 12.600 V10.700 H2.900 Z" fill="#0a6a0a"/></svg>
<span class="t" style="left:26px;top:576px;letter-spacing:-0.36px;width:12px;text-align:right;">1</span>
<div style="left:44px;top:579px;width:13px;height:13px;background:#fff;border:1px solid;border-color:#808080 #fff #fff #808080;box-shadow:inset 1px 1px 0 #404040, inset -1px -1px 0 #d4d0c8;"></div>
<div class="in ro" style="left:61px;top:576px;width:172px;height:21px;"><span class="t" style="left:2px;right:1.4px;top:3px;text-align:left;letter-spacing:-0.36px;">3-1</span></div>
<div class="in" style="left:235px;top:576px;width:172px;height:21px;"><span class="t" style="left:2px;right:1.4px;top:3px;text-align:left;letter-spacing:0.17px;">Projektleitung</span></div>
<div class="in" style="left:409px;top:576px;width:64px;height:21px;"><span class="t" style="left:2px;right:1.4px;top:3px;text-align:right;letter-spacing:-0.36px;">24:00</span></div>
<span class="t" style="left:478px;top:582px;">h</span>
<div class="in" style="left:485px;top:576px;width:64px;height:21px;"><span class="t" style="left:2px;right:1.4px;top:3px;text-align:right;letter-spacing:-0.36px;">3</span></div>
<span class="t" style="left:554.3px;top:582px;">Pt</span>
<div class="in" style="left:568px;top:576px;width:94px;height:21px;"><span class="t" style="left:2px;right:1.4px;top:3px;text-align:right;letter-spacing:-0.36px;">2.448,00</span></div>
<span class="t" style="left:666.5px;top:582px;">EUR</span>
<div class="in" style="left:696px;top:576px;width:93px;height:21px;"><span class="t" style="left:2px;right:1.4px;top:3px;text-align:right;letter-spacing:-0.36px;">1.472,52</span></div>
<span class="t" style="left:793.5px;top:582px;">EUR</span>
<div style="left:8px;top:600px;width:31px;height:24px;background:#eeebee;"></div>
<div style="left:40px;top:600px;width:20px;height:24px;background:#eeebee;"></div>
<div style="left:61px;top:600px;width:173px;height:24px;background:#eeebee;"></div>
<div style="left:235px;top:600px;width:173px;height:24px;background:#eeebee;"></div>
<div style="left:409px;top:600px;width:158px;height:24px;background:#eeebee;"></div>
<div style="left:568px;top:600px;width:126px;height:24px;background:#eeebee;"></div>
<div style="left:695px;top:600px;width:126px;height:24px;background:#eeebee;"></div>
<svg class="i" style="left:8px;top:602px;" width="16" height="16" viewBox="0 0 16 16"><rect x="0.5" y="0.5" width="15" height="15" rx="2.5" fill="#e1e1e1" stroke="#c4c4c4"/><path d="M1.500 14 V3 Q1.500 1.500 3 1.500 H14" stroke="#fbfbfb" stroke-width="1.2" fill="none"/><path d="M2.500 15.500 H13.500 Q15.500 15.500 15.500 13.500 V2.500" stroke="#989898" fill="none"/><path d="M5.500 2.500 H12 L14.500 5 V14.500 H5.500 Z" fill="#fafafa" stroke="#111" stroke-width="0.88"/><path d="M12 2.500 V5 H14.500" fill="none" stroke="#111" stroke-width="0.9"/><path d="M2.900 7.900 H8.300 V5.400 L12.500 9.300 L8.300 12.600 V10.700 H2.900 Z" fill="#0a6a0a"/></svg>
<span class="t" style="left:26px;top:601px;letter-spacing:-0.36px;width:12px;text-align:right;">2</span>
<div style="left:44px;top:604px;width:13px;height:13px;background:#fff;border:1px solid;border-color:#808080 #fff #fff #808080;box-shadow:inset 1px 1px 0 #404040, inset -1px -1px 0 #d4d0c8;"></div>
<div class="in ro" style="left:61px;top:601px;width:172px;height:21px;"><span class="t" style="left:2px;right:1.4px;top:3px;text-align:left;letter-spacing:-0.36px;">3-2</span></div>
<div class="in" style="left:235px;top:601px;width:172px;height:21px;"><span class="t" style="left:2px;right:1.4px;top:3px;text-align:left;letter-spacing:0.28px;">Konzeptgespräche</span></div>
<div class="in" style="left:409px;top:601px;width:64px;height:21px;"><span class="t" style="left:2px;right:1.4px;top:3px;text-align:right;letter-spacing:-0.36px;">16:00</span></div>
<span class="t" style="left:478px;top:607px;">h</span>
<div class="in" style="left:485px;top:601px;width:64px;height:21px;"><span class="t" style="left:2px;right:1.4px;top:3px;text-align:right;letter-spacing:-0.36px;">2</span></div>
<span class="t" style="left:554.3px;top:607px;">Pt</span>
<div class="in" style="left:568px;top:601px;width:94px;height:21px;"><span class="t" style="left:2px;right:1.4px;top:3px;text-align:right;letter-spacing:-0.36px;">1.472,00</span></div>
<span class="t" style="left:666.5px;top:607px;">EUR</span>
<div class="in" style="left:696px;top:601px;width:93px;height:21px;"><span class="t" style="left:2px;right:1.4px;top:3px;text-align:right;letter-spacing:-0.36px;">613,55</span></div>
<span class="t" style="left:793.5px;top:607px;">EUR</span>
<div style="left:8px;top:625px;width:31px;height:24px;background:#fdfbfd;"></div>
<div style="left:40px;top:625px;width:20px;height:24px;background:#fdfbfd;"></div>
<div style="left:61px;top:625px;width:173px;height:24px;background:#fdfbfd;"></div>
<div style="left:235px;top:625px;width:173px;height:24px;background:#fdfbfd;"></div>
<div style="left:409px;top:625px;width:158px;height:24px;background:#fdfbfd;"></div>
<div style="left:568px;top:625px;width:126px;height:24px;background:#fdfbfd;"></div>
<div style="left:695px;top:625px;width:126px;height:24px;background:#fdfbfd;"></div>
<svg class="i" style="left:8px;top:627px;" width="16" height="16" viewBox="0 0 16 16"><rect x="0.5" y="0.5" width="15" height="15" rx="2.5" fill="#e1e1e1" stroke="#c4c4c4"/><path d="M1.500 14 V3 Q1.500 1.500 3 1.500 H14" stroke="#fbfbfb" stroke-width="1.2" fill="none"/><path d="M2.500 15.500 H13.500 Q15.500 15.500 15.500 13.500 V2.500" stroke="#989898" fill="none"/><path d="M5.500 2.500 H12 L14.500 5 V14.500 H5.500 Z" fill="#fafafa" stroke="#111" stroke-width="0.88"/><path d="M12 2.500 V5 H14.500" fill="none" stroke="#111" stroke-width="0.9"/><path d="M2.900 7.900 H8.300 V5.400 L12.500 9.300 L8.300 12.600 V10.700 H2.900 Z" fill="#0a6a0a"/></svg>
<span class="t" style="left:26px;top:626px;letter-spacing:-0.36px;width:12px;text-align:right;">3</span>
<div style="left:44px;top:629px;width:13px;height:13px;background:#fff;border:1px solid;border-color:#808080 #fff #fff #808080;box-shadow:inset 1px 1px 0 #404040, inset -1px -1px 0 #d4d0c8;"></div>
<div class="in ro" style="left:61px;top:626px;width:172px;height:21px;"><span class="t" style="left:2px;right:1.4px;top:3px;text-align:left;letter-spacing:-0.36px;">3-3</span></div>
<div class="in" style="left:235px;top:626px;width:172px;height:21px;"><span class="t" style="left:2px;right:1.4px;top:3px;text-align:left;letter-spacing:0.11px;">Präsentation der Konzeption</span></div>
<div class="in" style="left:409px;top:626px;width:64px;height:21px;"><span class="t" style="left:2px;right:1.4px;top:3px;text-align:right;letter-spacing:-0.36px;">8:00</span></div>
<span class="t" style="left:478px;top:632px;">h</span>
<div class="in" style="left:485px;top:626px;width:64px;height:21px;"><span class="t" style="left:2px;right:1.4px;top:3px;text-align:right;letter-spacing:-0.36px;">1</span></div>
<span class="t" style="left:554.3px;top:632px;">Pt</span>
<div class="in" style="left:568px;top:626px;width:94px;height:21px;"><span class="t" style="left:2px;right:1.4px;top:3px;text-align:right;letter-spacing:-0.36px;">736,00</span></div>
<span class="t" style="left:666.5px;top:632px;">EUR</span>
<div class="in" style="left:696px;top:626px;width:93px;height:21px;"><span class="t" style="left:2px;right:1.4px;top:3px;text-align:right;letter-spacing:-0.36px;">613,55</span></div>
<span class="t" style="left:793.5px;top:632px;">EUR</span>
<div style="left:8px;top:650px;width:31px;height:24px;background:#eeebee;"></div>
<div style="left:40px;top:650px;width:20px;height:24px;background:#eeebee;"></div>
<div style="left:61px;top:650px;width:173px;height:24px;background:#eeebee;"></div>
<div style="left:235px;top:650px;width:173px;height:24px;background:#eeebee;"></div>
<div style="left:409px;top:650px;width:158px;height:24px;background:#eeebee;"></div>
<div style="left:568px;top:650px;width:126px;height:24px;background:#eeebee;"></div>
<div style="left:695px;top:650px;width:126px;height:24px;background:#eeebee;"></div>
<svg class="i" style="left:8px;top:652px;" width="16" height="16" viewBox="0 0 16 16"><rect x="0.5" y="0.5" width="15" height="15" rx="2.5" fill="#e1e1e1" stroke="#c4c4c4"/><path d="M1.500 14 V3 Q1.500 1.500 3 1.500 H14" stroke="#fbfbfb" stroke-width="1.2" fill="none"/><path d="M2.500 15.500 H13.500 Q15.500 15.500 15.500 13.500 V2.500" stroke="#989898" fill="none"/><path d="M5.500 2.500 H12 L14.500 5 V14.500 H5.500 Z" fill="#fafafa" stroke="#111" stroke-width="0.88"/><path d="M12 2.500 V5 H14.500" fill="none" stroke="#111" stroke-width="0.9"/><path d="M2.900 7.900 H8.300 V5.400 L12.500 9.300 L8.300 12.600 V10.700 H2.900 Z" fill="#0a6a0a"/></svg>
<span class="t" style="left:26px;top:651px;letter-spacing:-0.36px;width:12px;text-align:right;">4</span>
<div style="left:44px;top:654px;width:13px;height:13px;background:#fff;border:1px solid;border-color:#808080 #fff #fff #808080;box-shadow:inset 1px 1px 0 #404040, inset -1px -1px 0 #d4d0c8;"></div>
<div class="in ro" style="left:61px;top:651px;width:172px;height:21px;"><span class="t" style="left:2px;right:1.4px;top:3px;text-align:left;letter-spacing:-0.36px;">3-4</span></div>
<div class="in" style="left:235px;top:651px;width:172px;height:21px;"><span class="t" style="left:2px;right:1.4px;top:3px;text-align:left;letter-spacing:0.02px;">Pflichtenheft erstellen</span></div>
<div class="in" style="left:409px;top:651px;width:64px;height:21px;"><span class="t" style="left:2px;right:1.4px;top:3px;text-align:right;letter-spacing:-0.36px;">16:00</span></div>
<span class="t" style="left:478px;top:657px;">h</span>
<div class="in" style="left:485px;top:651px;width:64px;height:21px;"><span class="t" style="left:2px;right:1.4px;top:3px;text-align:right;letter-spacing:-0.36px;">2</span></div>
<span class="t" style="left:554.3px;top:657px;">Pt</span>
<div class="in" style="left:568px;top:651px;width:94px;height:21px;"><span class="t" style="left:2px;right:1.4px;top:3px;text-align:right;letter-spacing:-0.36px;">1.632,00</span></div>
<span class="t" style="left:666.5px;top:657px;">EUR</span>
<div class="in" style="left:696px;top:651px;width:93px;height:21px;"><span class="t" style="left:2px;right:1.4px;top:3px;text-align:right;letter-spacing:-0.36px;">736,26</span></div>
<span class="t" style="left:793.5px;top:657px;">EUR</span>
<div style="left:8px;top:675px;width:31px;height:24px;background:#fdfbfd;"></div>
<div style="left:40px;top:675px;width:20px;height:24px;background:#fdfbfd;"></div>
<div style="left:61px;top:675px;width:173px;height:24px;background:#fdfbfd;"></div>
<div style="left:235px;top:675px;width:173px;height:24px;background:#fdfbfd;"></div>
<div style="left:409px;top:675px;width:158px;height:24px;background:#fdfbfd;"></div>
<div style="left:568px;top:675px;width:126px;height:24px;background:#fdfbfd;"></div>
<div style="left:695px;top:675px;width:126px;height:24px;background:#fdfbfd;"></div>
<svg class="i" style="left:8px;top:677px;" width="16" height="16" viewBox="0 0 16 16"><rect x="0.5" y="0.5" width="15" height="15" rx="2.5" fill="#e1e1e1" stroke="#c4c4c4"/><path d="M1.500 14 V3 Q1.500 1.500 3 1.500 H14" stroke="#fbfbfb" stroke-width="1.2" fill="none"/><path d="M2.500 15.500 H13.500 Q15.500 15.500 15.500 13.500 V2.500" stroke="#989898" fill="none"/><path d="M5.500 2.500 H12 L14.500 5 V14.500 H5.500 Z" fill="#fafafa" stroke="#111" stroke-width="0.88"/><path d="M12 2.500 V5 H14.500" fill="none" stroke="#111" stroke-width="0.9"/><path d="M2.900 7.900 H8.300 V5.400 L12.500 9.300 L8.300 12.600 V10.700 H2.900 Z" fill="#0a6a0a"/></svg>
<span class="t" style="left:26px;top:676px;letter-spacing:-0.36px;width:12px;text-align:right;">5</span>
<div style="left:44px;top:679px;width:13px;height:13px;background:#fff;border:1px solid;border-color:#808080 #fff #fff #808080;box-shadow:inset 1px 1px 0 #404040, inset -1px -1px 0 #d4d0c8;"></div>
<div class="in ro" style="left:61px;top:676px;width:172px;height:21px;"><span class="t" style="left:2px;right:1.4px;top:3px;text-align:left;letter-spacing:-0.36px;">3-5</span></div>
<div class="in" style="left:235px;top:676px;width:172px;height:21px;"><span class="t" style="left:2px;right:1.4px;top:3px;text-align:left;letter-spacing:0.14px;">Entwicklung Java</span></div>
<div class="in" style="left:409px;top:676px;width:64px;height:21px;"><span class="t" style="left:2px;right:1.4px;top:3px;text-align:right;letter-spacing:-0.36px;">64:00</span></div>
<span class="t" style="left:478px;top:682px;">h</span>
<div class="in" style="left:485px;top:676px;width:64px;height:21px;"><span class="t" style="left:2px;right:1.4px;top:3px;text-align:right;letter-spacing:-0.36px;">8</span></div>
<span class="t" style="left:554.3px;top:682px;">Pt</span>
<div class="in" style="left:568px;top:676px;width:94px;height:21px;"><span class="t" style="left:2px;right:1.4px;top:3px;text-align:right;letter-spacing:-0.36px;">6.528,00</span></div>
<span class="t" style="left:666.5px;top:682px;">EUR</span>
<div class="in" style="left:696px;top:676px;width:93px;height:21px;"><span class="t" style="left:2px;right:1.4px;top:3px;text-align:right;letter-spacing:-0.36px;">2.454,20</span></div>
<span class="t" style="left:793.5px;top:682px;">EUR</span>
<div style="left:8px;top:700px;width:31px;height:24px;background:#eeebee;"></div>
<div style="left:40px;top:700px;width:20px;height:24px;background:#eeebee;"></div>
<div style="left:61px;top:700px;width:173px;height:24px;background:#eeebee;"></div>
<div style="left:235px;top:700px;width:173px;height:24px;background:#eeebee;"></div>
<div style="left:409px;top:700px;width:158px;height:24px;background:#eeebee;"></div>
<div style="left:568px;top:700px;width:126px;height:24px;background:#eeebee;"></div>
<div style="left:695px;top:700px;width:126px;height:24px;background:#eeebee;"></div>
<svg class="i" style="left:8px;top:702px;" width="16" height="16" viewBox="0 0 16 16"><rect x="0.5" y="0.5" width="15" height="15" rx="2.5" fill="#e1e1e1" stroke="#c4c4c4"/><path d="M1.500 14 V3 Q1.500 1.500 3 1.500 H14" stroke="#fbfbfb" stroke-width="1.2" fill="none"/><path d="M2.500 15.500 H13.500 Q15.500 15.500 15.500 13.500 V2.500" stroke="#989898" fill="none"/><path d="M5.500 2.500 H12 L14.500 5 V14.500 H5.500 Z" fill="#fafafa" stroke="#111" stroke-width="0.88"/><path d="M12 2.500 V5 H14.500" fill="none" stroke="#111" stroke-width="0.9"/><path d="M2.900 7.900 H8.300 V5.400 L12.500 9.300 L8.300 12.600 V10.700 H2.900 Z" fill="#0a6a0a"/></svg>
<span class="t" style="left:26px;top:701px;letter-spacing:-0.36px;width:12px;text-align:right;">6</span>
<div style="left:44px;top:704px;width:13px;height:13px;background:#fff;border:1px solid;border-color:#808080 #fff #fff #808080;box-shadow:inset 1px 1px 0 #404040, inset -1px -1px 0 #d4d0c8;"></div>
<div class="in ro" style="left:61px;top:701px;width:172px;height:21px;"><span class="t" style="left:2px;right:1.4px;top:3px;text-align:left;letter-spacing:-0.36px;">3-6</span></div>
<div class="in" style="left:235px;top:701px;width:172px;height:21px;"><span class="t" style="left:2px;right:1.4px;top:3px;text-align:left;letter-spacing:0.03px;">Entwicklung VB6</span></div>
<div class="in" style="left:409px;top:701px;width:64px;height:21px;"><span class="t" style="left:2px;right:1.4px;top:3px;text-align:right;letter-spacing:-0.36px;">56:00</span></div>
<span class="t" style="left:478px;top:707px;">h</span>
<div class="in" style="left:485px;top:701px;width:64px;height:21px;"><span class="t" style="left:2px;right:1.4px;top:3px;text-align:right;letter-spacing:-0.36px;">7</span></div>
<span class="t" style="left:554.3px;top:707px;">Pt</span>
<div class="in" style="left:568px;top:701px;width:94px;height:21px;"><span class="t" style="left:2px;right:1.4px;top:3px;text-align:right;letter-spacing:-0.36px;">5.712,00</span></div>
<span class="t" style="left:666.5px;top:707px;">EUR</span>
<div class="in" style="left:696px;top:701px;width:93px;height:21px;"><span class="t" style="left:2px;right:1.4px;top:3px;text-align:right;letter-spacing:-0.36px;">2.454,20</span></div>
<span class="t" style="left:793.5px;top:707px;">EUR</span>
<div style="left:8px;top:725px;width:31px;height:24px;background:#fdfbfd;"></div>
<div style="left:40px;top:725px;width:20px;height:24px;background:#fdfbfd;"></div>
<div style="left:61px;top:725px;width:173px;height:24px;background:#fdfbfd;"></div>
<div style="left:235px;top:725px;width:173px;height:24px;background:#fdfbfd;"></div>
<div style="left:409px;top:725px;width:158px;height:24px;background:#fdfbfd;"></div>
<div style="left:568px;top:725px;width:126px;height:24px;background:#fdfbfd;"></div>
<div style="left:695px;top:725px;width:126px;height:24px;background:#fdfbfd;"></div>
<svg class="i" style="left:8px;top:727px;" width="16" height="16" viewBox="0 0 16 16"><rect x="0.5" y="0.5" width="15" height="15" rx="2.5" fill="#e1e1e1" stroke="#c4c4c4"/><path d="M1.500 14 V3 Q1.500 1.500 3 1.500 H14" stroke="#fbfbfb" stroke-width="1.2" fill="none"/><path d="M2.500 15.500 H13.500 Q15.500 15.500 15.500 13.500 V2.500" stroke="#989898" fill="none"/><path d="M5.500 2.500 H12 L14.500 5 V14.500 H5.500 Z" fill="#fafafa" stroke="#111" stroke-width="0.88"/><path d="M12 2.500 V5 H14.500" fill="none" stroke="#111" stroke-width="0.9"/><path d="M2.900 7.900 H8.300 V5.400 L12.500 9.300 L8.300 12.600 V10.700 H2.900 Z" fill="#0a6a0a"/></svg>
<span class="t" style="left:26px;top:726px;letter-spacing:-0.36px;width:12px;text-align:right;">7</span>
<div style="left:44px;top:729px;width:13px;height:13px;background:#fff;border:1px solid;border-color:#808080 #fff #fff #808080;box-shadow:inset 1px 1px 0 #404040, inset -1px -1px 0 #d4d0c8;"></div>
<div class="in ro" style="left:61px;top:726px;width:172px;height:21px;"><span class="t" style="left:2px;right:1.4px;top:3px;text-align:left;letter-spacing:-0.36px;">3-7</span></div>
<div class="in" style="left:235px;top:726px;width:172px;height:21px;"><span class="t" style="left:2px;right:1.4px;top:3px;text-align:left;letter-spacing:0.2px;">Dokumentation</span></div>
<div class="in" style="left:409px;top:726px;width:64px;height:21px;"><span class="t" style="left:2px;right:1.4px;top:3px;text-align:right;letter-spacing:-0.36px;">20:00</span></div>
<span class="t" style="left:478px;top:732px;">h</span>
<div class="in" style="left:485px;top:726px;width:64px;height:21px;"><span class="t" style="left:2px;right:1.4px;top:3px;text-align:right;letter-spacing:-0.36px;">2,5</span></div>
<span class="t" style="left:554.3px;top:732px;">Pt</span>
<div class="in" style="left:568px;top:726px;width:94px;height:21px;"><span class="t" style="left:2px;right:1.4px;top:3px;text-align:right;letter-spacing:-0.36px;">1.840,00</span></div>
<span class="t" style="left:666.5px;top:732px;">EUR</span>
<div class="in" style="left:696px;top:726px;width:93px;height:21px;"><span class="t" style="left:2px;right:1.4px;top:3px;text-align:right;letter-spacing:-0.36px;">1.227,10</span></div>
<span class="t" style="left:793.5px;top:732px;">EUR</span>
<div style="left:8px;top:750px;width:31px;height:24px;background:#eeebee;"></div>
<div style="left:40px;top:750px;width:20px;height:24px;background:#eeebee;"></div>
<div style="left:61px;top:750px;width:173px;height:24px;background:#eeebee;"></div>
<div style="left:235px;top:750px;width:173px;height:24px;background:#eeebee;"></div>
<div style="left:409px;top:750px;width:158px;height:24px;background:#eeebee;"></div>
<div style="left:568px;top:750px;width:126px;height:24px;background:#eeebee;"></div>
<div style="left:695px;top:750px;width:126px;height:24px;background:#eeebee;"></div>
<svg class="i" style="left:8px;top:752px;" width="16" height="16" viewBox="0 0 16 16"><rect x="0.5" y="0.5" width="15" height="15" rx="2.5" fill="#e1e1e1" stroke="#c4c4c4"/><path d="M1.500 14 V3 Q1.500 1.500 3 1.500 H14" stroke="#fbfbfb" stroke-width="1.2" fill="none"/><path d="M2.500 15.500 H13.500 Q15.500 15.500 15.500 13.500 V2.500" stroke="#989898" fill="none"/><path d="M5.500 2.500 H12 L14.500 5 V14.500 H5.500 Z" fill="#fafafa" stroke="#111" stroke-width="0.88"/><path d="M12 2.500 V5 H14.500" fill="none" stroke="#111" stroke-width="0.9"/><path d="M2.900 7.900 H8.300 V5.400 L12.500 9.300 L8.300 12.600 V10.700 H2.900 Z" fill="#0a6a0a"/></svg>
<span class="t" style="left:26px;top:751px;letter-spacing:-0.36px;width:12px;text-align:right;">8</span>
<div style="left:44px;top:754px;width:13px;height:13px;background:#fff;border:1px solid;border-color:#808080 #fff #fff #808080;box-shadow:inset 1px 1px 0 #404040, inset -1px -1px 0 #d4d0c8;"></div>
<div class="in ro" style="left:61px;top:751px;width:172px;height:21px;"><span class="t" style="left:2px;right:1.4px;top:3px;text-align:left;letter-spacing:-0.36px;">3-8</span></div>
<div class="in" style="left:235px;top:751px;width:172px;height:21px;"><span class="t" style="left:2px;right:1.4px;top:3px;text-align:left;letter-spacing:0.6px;">Testen</span></div>
<div class="in" style="left:409px;top:751px;width:64px;height:21px;"><span class="t" style="left:2px;right:1.4px;top:3px;text-align:right;letter-spacing:-0.36px;">20:00</span></div>
<span class="t" style="left:478px;top:757px;">h</span>
<div class="in" style="left:485px;top:751px;width:64px;height:21px;"><span class="t" style="left:2px;right:1.4px;top:3px;text-align:right;letter-spacing:-0.36px;">2,5</span></div>
<span class="t" style="left:554.3px;top:757px;">Pt</span>
<div class="in" style="left:568px;top:751px;width:94px;height:21px;"><span class="t" style="left:2px;right:1.4px;top:3px;text-align:right;letter-spacing:-0.36px;">2.040,00</span></div>
<span class="t" style="left:666.5px;top:757px;">EUR</span>
<div class="in" style="left:696px;top:751px;width:93px;height:21px;"><span class="t" style="left:2px;right:1.4px;top:3px;text-align:right;letter-spacing:-0.36px;">1.227,10</span></div>
<span class="t" style="left:793.5px;top:757px;">EUR</span>
<div style="left:8px;top:775px;width:31px;height:24px;background:#fdfbfd;"></div>
<div style="left:40px;top:775px;width:20px;height:24px;background:#fdfbfd;"></div>
<div style="left:61px;top:775px;width:173px;height:24px;background:#fdfbfd;"></div>
<div style="left:235px;top:775px;width:173px;height:24px;background:#fdfbfd;"></div>
<div style="left:409px;top:775px;width:158px;height:24px;background:#fdfbfd;"></div>
<div style="left:568px;top:775px;width:126px;height:24px;background:#fdfbfd;"></div>
<div style="left:695px;top:775px;width:126px;height:24px;background:#fdfbfd;"></div>
<svg class="i" style="left:8px;top:777px;" width="16" height="16" viewBox="0 0 16 16"><rect x="0.5" y="0.5" width="15" height="15" rx="2.5" fill="#e1e1e1" stroke="#c4c4c4"/><path d="M1.500 14 V3 Q1.500 1.500 3 1.500 H14" stroke="#fbfbfb" stroke-width="1.2" fill="none"/><path d="M2.500 15.500 H13.500 Q15.500 15.500 15.500 13.500 V2.500" stroke="#989898" fill="none"/><path d="M5.500 2.500 H12 L14.500 5 V14.500 H5.500 Z" fill="#fafafa" stroke="#111" stroke-width="0.88"/><path d="M12 2.500 V5 H14.500" fill="none" stroke="#111" stroke-width="0.9"/><path d="M2.900 7.900 H8.300 V5.400 L12.500 9.300 L8.300 12.600 V10.700 H2.900 Z" fill="#0a6a0a"/></svg>
<span class="t" style="left:26px;top:776px;letter-spacing:-0.36px;width:12px;text-align:right;">9</span>
<div style="left:44px;top:779px;width:13px;height:13px;background:#fff;border:1px solid;border-color:#808080 #fff #fff #808080;box-shadow:inset 1px 1px 0 #404040, inset -1px -1px 0 #d4d0c8;"></div>
<div class="in ro" style="left:61px;top:776px;width:172px;height:21px;"><span class="t" style="left:2px;right:1.4px;top:3px;text-align:left;letter-spacing:-0.36px;">3-9</span></div>
<div class="in" style="left:235px;top:776px;width:172px;height:21px;"><span class="t" style="left:2px;right:1.4px;top:3px;text-align:left;letter-spacing:0.23px;">Reisekosten (Pauschal)</span></div>
<div class="in" style="left:409px;top:776px;width:64px;height:21px;"><span class="t" style="left:2px;right:1.4px;top:3px;text-align:right;letter-spacing:-0.36px;">1:00</span></div>
<span class="t" style="left:478px;top:782px;">h</span>
<div class="in" style="left:485px;top:776px;width:64px;height:21px;"><span class="t" style="left:2px;right:1.4px;top:3px;text-align:right;letter-spacing:-0.36px;">0,125</span></div>
<span class="t" style="left:554.3px;top:782px;">Pt</span>
<div class="in" style="left:568px;top:776px;width:94px;height:21px;"><span class="t" style="left:2px;right:1.4px;top:3px;text-align:right;letter-spacing:-0.36px;">1.000,00</span></div>
<span class="t" style="left:666.5px;top:782px;">EUR</span>
<div class="in" style="left:696px;top:776px;width:93px;height:21px;"><span class="t" style="left:2px;right:1.4px;top:3px;text-align:right;letter-spacing:-0.36px;">1.000,00</span></div>
<span class="t" style="left:793.5px;top:782px;">EUR</span>
</div></body></html>
